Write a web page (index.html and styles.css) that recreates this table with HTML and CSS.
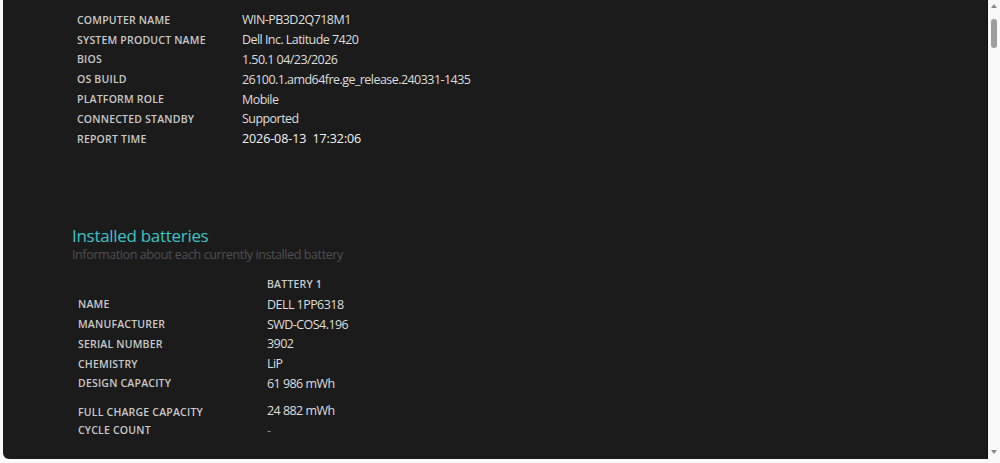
FILE: index.html
```html
<!DOCTYPE html>
<html>
<head>
<meta charset="utf-8">
<link rel="stylesheet" href="styles.css">
</head>
<body>
<div class="window">
  <main class="panel">
    <section class="info">
      <div class="row"><div class="lbl">COMPUTER NAME</div><div class="val">WIN-PB3D2Q718M1</div></div>
      <div class="row"><div class="lbl">SYSTEM PRODUCT NAME</div><div class="val">Dell Inc. Latitude 7420</div></div>
      <div class="row"><div class="lbl">BIOS</div><div class="val">1.50.1 04/23/2026</div></div>
      <div class="row"><div class="lbl">OS BUILD</div><div class="val">26100.1.amd64fre.ge_release.240331-1435</div></div>
      <div class="row"><div class="lbl">PLATFORM ROLE</div><div class="val">Mobile</div></div>
      <div class="row"><div class="lbl">CONNECTED STANDBY</div><div class="val">Supported</div></div>
      <div class="row"><div class="lbl">REPORT TIME</div><div class="val time">2026-08-13  17:32:06</div></div>
    </section>

    <section class="batteries">
      <h2 class="title">Installed batteries</h2>
      <p class="subtitle">Information about each currently installed battery</p>
      <div class="btable">
        <div class="row"><div class="lbl"></div><div class="colhead">BATTERY 1</div></div>
        <div class="row"><div class="lbl">NAME</div><div class="val">DELL 1PP6318</div></div>
        <div class="row"><div class="lbl">MANUFACTURER</div><div class="val">SWD-COS4.196</div></div>
        <div class="row"><div class="lbl">SERIAL NUMBER</div><div class="val">3902</div></div>
        <div class="row"><div class="lbl">CHEMISTRY</div><div class="val">LiP</div></div>
        <div class="row"><div class="lbl">DESIGN CAPACITY</div><div class="val">61 986 mWh</div></div>
        <div class="row tall"><div class="lbl">FULL CHARGE CAPACITY</div><div class="val">24 882 mWh</div></div>
        <div class="row"><div class="lbl">CYCLE COUNT</div><div class="val dim">-</div></div>
      </div>
    </section>
  </main>
  <aside class="scrollbar">
    <div class="arrow up"></div>
    <div class="track"><div class="thumb"></div></div>
    <div class="arrow down"></div>
  </aside>
</div>
</body>
</html>
```

FILE: styles.css
```css
* { box-sizing: border-box; }
html, body {
  margin: 0;
  padding: 0;
  background: #f9f9f9;
  font-family: "Open Sans", "Noto Sans", sans-serif;
}
.window {
  display: flex;
  width: 1000px;
  height: 463px;
}
.panel {
  flex: 1;
  margin-left: 3px;
  height: 459px;
  background: #1b1b1b;
  border-bottom-left-radius: 6px;
  border-right: 1px solid #101010;
  padding: 10px 0 0 0;
  overflow: hidden;
}
.row {
  display: flex;
  align-items: center;
  height: 19.8px;
}
.info {
  padding-left: 74px;
}
.info .lbl {
  flex: 0 0 165px;
  width: 165px;
}
.lbl {
  font-size: 10.5px;
  font-weight: 600;
  color: #c9c9c9;
  letter-spacing: 0.2px;
  white-space: nowrap;
}
.val {
  font-size: 12.5px;
  color: #dedede;
  white-space: pre;
  letter-spacing: -0.55px;
}
.val.time {
  color: #f4f4f4;
  font-weight: 500;
  letter-spacing: -0.1px;
}
.batteries {
  padding-left: 69px;
  margin-top: 76px;
}
.title {
  margin: 0;
  font-size: 17px;
  font-weight: 500;
  color: #3ec3c6;
  line-height: 22px;
  letter-spacing: -0.3px;
}
.subtitle {
  margin: 0;
  font-size: 12.5px;
  color: #505050;
  line-height: 16px;
  letter-spacing: -0.4px;
}
.btable {
  padding-left: 6px;
  margin-top: 12px;
}
.btable .lbl {
  flex: 0 0 189px;
  width: 189px;
}
.btable .row.tall {
  height: 27px;
  align-items: flex-end;
  padding-bottom: 1px;
}
.colhead {
  font-size: 10.5px;
  font-weight: 600;
  color: #c9c9c9;
  letter-spacing: 0.2px;
}
.val.dim { color: #8a8a8a; }

.scrollbar {
  width: 12px;
  display: flex;
  flex-direction: column;
  align-items: center;
  background: #f9f9f9;
  padding: 3px 0;
}
.arrow {
  width: 0;
  height: 0;
  border-left: 3.5px solid transparent;
  border-right: 3.5px solid transparent;
}
.arrow.up { border-bottom: 4px solid #8a8a8a; margin-top: 1px; }
.arrow.down { border-top: 4px solid #8a8a8a; margin-bottom: 6px; }
.track {
  flex: 1;
  width: 100%;
  display: flex;
  justify-content: center;
  padding-top: 11px;
}
.thumb {
  width: 6px;
  height: 29px;
  border-radius: 3px;
  background: #9d9d9d;
}
```
